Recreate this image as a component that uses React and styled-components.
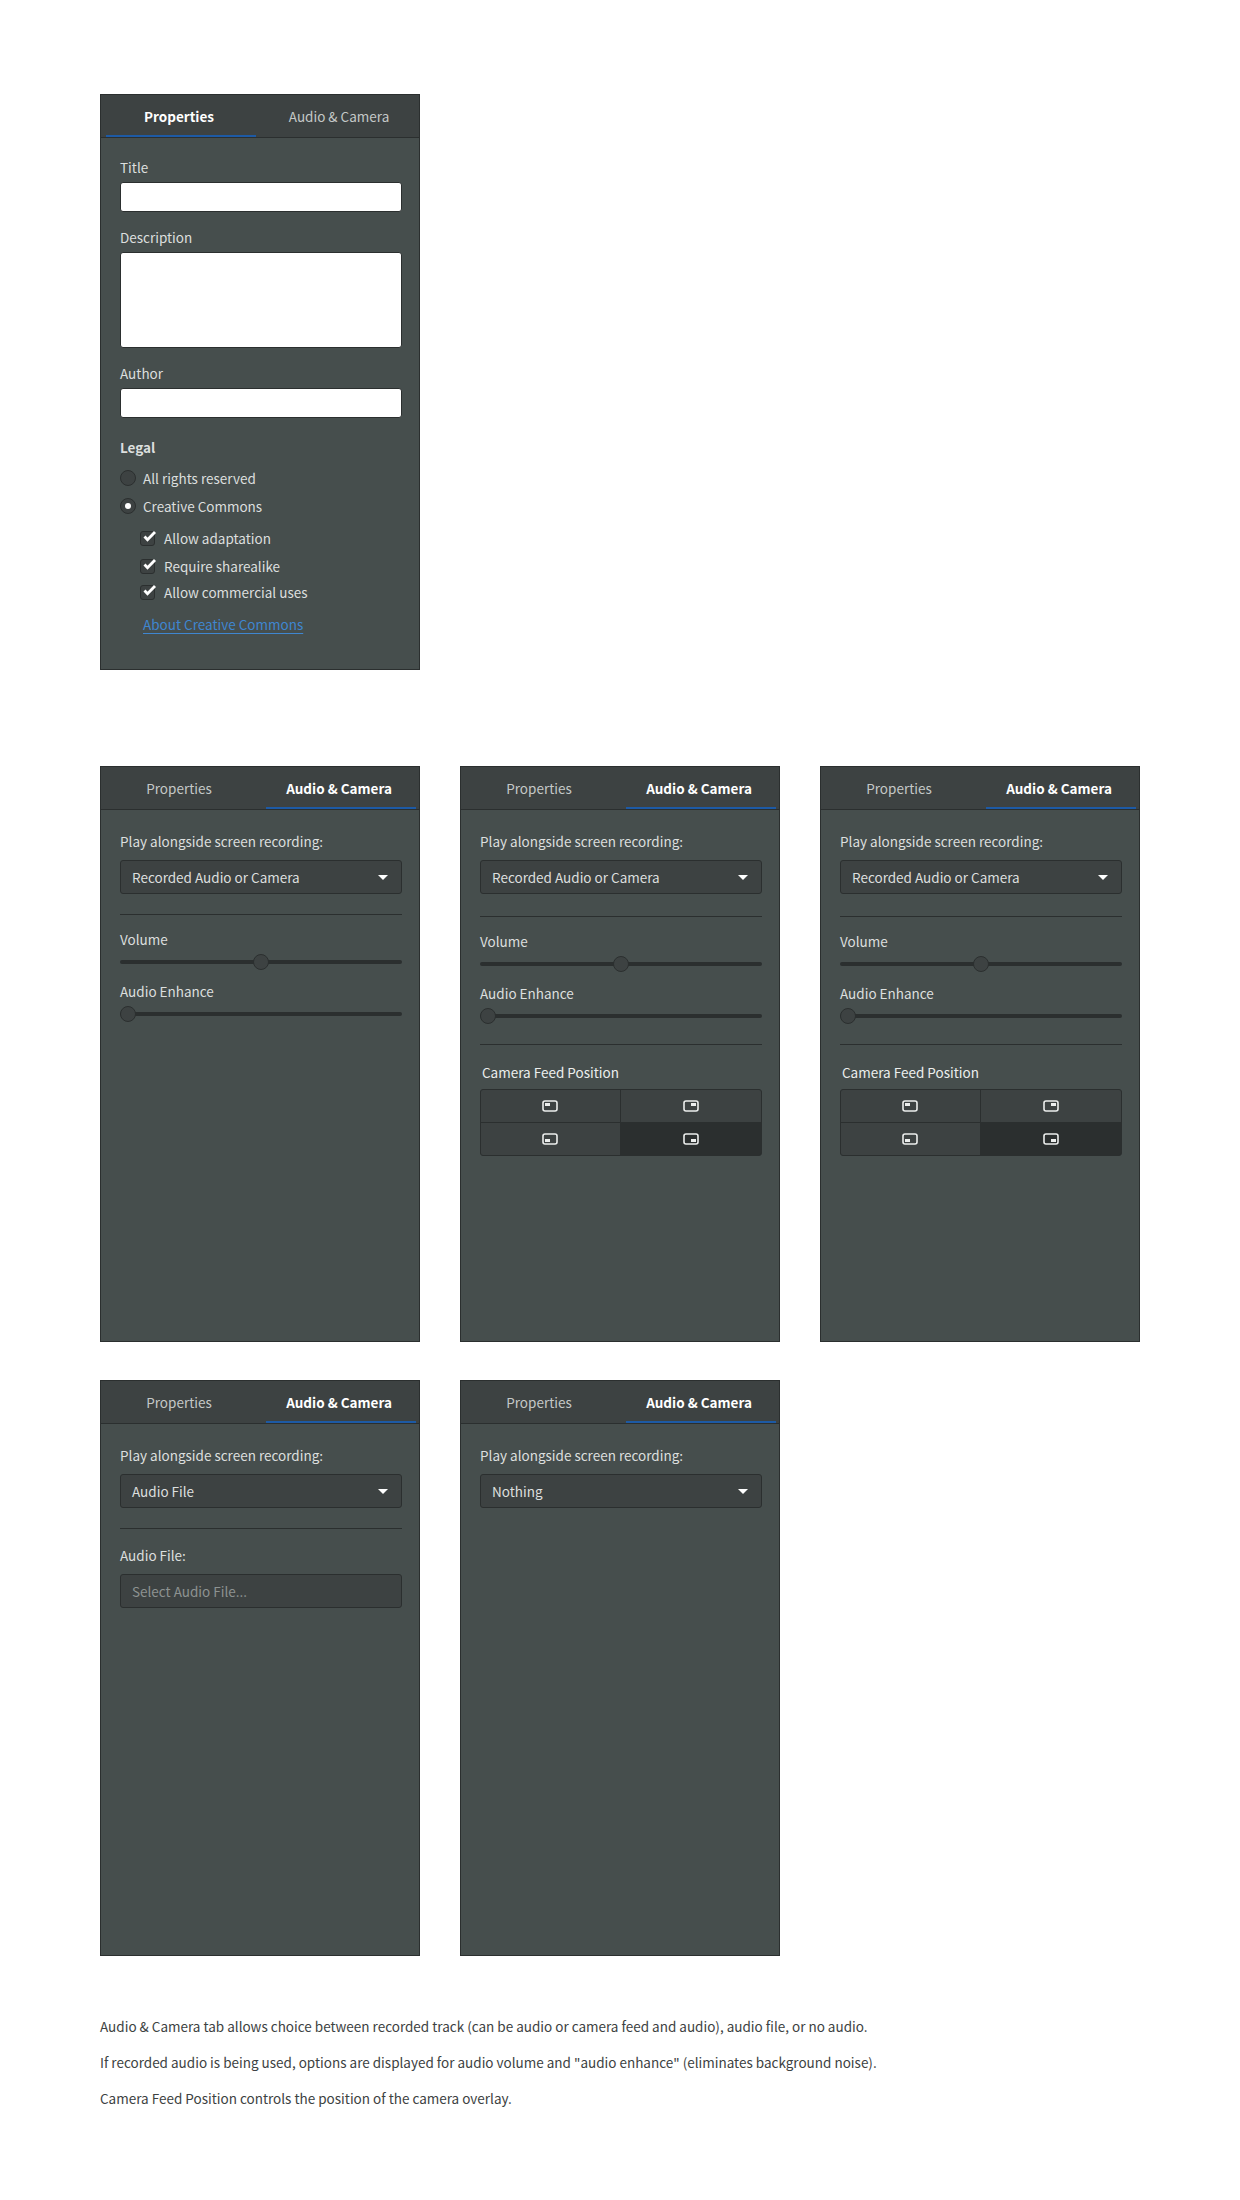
import React from "react";
import styled, { createGlobalStyle } from "styled-components";

const Global = createGlobalStyle`
  html, body { margin: 0; padding: 0; background: #fff; }
  body { font-family: "Noto Sans CJK SC", "Noto Sans", sans-serif; font-size: 13.5px; line-height: 20px; }
`;

const Page = styled.div`
  width: 1240px;
  height: 2200px;
  box-sizing: border-box;
  padding: 94px 0 0 100px;
`;
const Row = styled.div`
  display: flex;
  gap: 40px;
  margin-bottom: ${(p) => p.$mb || 0}px;
`;
const Panel = styled.div`
  width: 320px;
  height: 576px;
  box-sizing: border-box;
  background: #464e4d;
  border: 1px solid #2b2f2f;
  color: #dcdfde;
`;
const Tabs = styled.div`
  display: flex;
  gap: 10px;
  height: 43px;
  box-sizing: border-box;
  padding: 0 3px 0 5px;
  background: #3d4242;
  border-bottom: 1px solid #2b2f2f;
`;
const Tab = styled.div`
  width: 150px;
  height: 42px;
  box-sizing: border-box;
  display: flex;
  align-items: center;
  justify-content: center;
  padding: 2px 4px 0 0;
  color: ${(p) => (p.$active ? "#fff" : "#c4c8c7")};
  font-weight: ${(p) => (p.$active ? 700 : 400)};
  border-bottom: 2px solid ${(p) => (p.$active ? "#1d5aa5" : "transparent")};
`;
const Body = styled.div`
  padding: ${(p) => p.$top || 21}px 17px 0 19px;
`;
const Label = styled.div`
  height: 20px;
  margin: ${(p) => p.$mt || 0}px 0 ${(p) => p.$mb ?? 5}px ${(p) => p.$ml || 0}px;
  color: ${(p) => p.$color || "#dcdfde"};
  font-weight: ${(p) => p.$weight || 400};
`;
const TextBox = styled.div`
  height: ${(p) => p.$h || 30}px;
  box-sizing: border-box;
  background: #fff;
  border: 1px solid #2b2f2f;
  border-radius: 3px;
`;
const Select = styled.div`
  height: 34px;
  box-sizing: border-box;
  display: flex;
  align-items: center;
  justify-content: space-between;
  padding: 0 13px 0 11px;
  background: #3d4242;
  border: 1px solid #2b2f2f;
  border-radius: 3px;
  color: ${(p) => p.$color || "#dcdfde"};
`;
const Caret = styled.span`
  width: 0;
  height: 0;
  border-left: 5px solid transparent;
  border-right: 5px solid transparent;
  border-top: 5px solid #fff;
`;
const Divider = styled.div`
  height: 1px;
  background: #2b2f2f;
  margin: ${(p) => p.$mt || 20}px 0 ${(p) => p.$mb || 14}px;
`;
const SliderWrap = styled.div`
  position: relative;
  height: 16px;
  display: flex;
  align-items: center;
  margin-bottom: ${(p) => p.$mb || 0}px;
`;
const Track = styled.div`
  width: 100%;
  height: 4px;
  border-radius: 2px;
  background: #2b2f2f;
`;
const Thumb = styled.div`
  position: absolute;
  top: 0;
  width: 16px;
  height: 16px;
  box-sizing: border-box;
  border-radius: 50%;
  background: #3d4242;
  border: 1px solid #2b2f2f;
`;
const RadioRow = styled.div`
  display: flex;
  align-items: center;
  gap: 7px;
  height: 20px;
  margin-bottom: ${(p) => p.$mb || 8}px;
`;
const Radio = styled.span`
  width: 16px;
  height: 16px;
  box-sizing: border-box;
  border-radius: 50%;
  background: #3d4242;
  border: 1px solid #2b2f2f;
  display: flex;
  align-items: center;
  justify-content: center;
  &::after {
    content: "";
    display: ${(p) => (p.$on ? "block" : "none")};
    width: 6px;
    height: 6px;
    border-radius: 50%;
    background: #fff;
  }
`;
const CheckRow = styled.div`
  display: flex;
  align-items: center;
  gap: 9px;
  height: 20px;
  margin: 0 0 ${(p) => p.$mb || 0}px 20px;
`;
const Check = styled.span`
  position: relative;
  width: 15px;
  height: 15px;
  box-sizing: border-box;
  border-radius: 3px;
  background: #3d4242;
  border: 1px solid #2b2f2f;
  flex: none;
  svg {
    position: absolute;
    left: 0;
    top: -3px;
  }
`;
const Link = styled.a`
  display: inline-block;
  height: 20px;
  margin: 12px 0 0 23px;
  color: #3f86d0;
  text-decoration: underline;
  text-underline-offset: 3px;
`;
const PosGrid = styled.div`
  display: grid;
  grid-template-columns: 139px 140px;
  grid-template-rows: 32px 32px;
  box-sizing: border-box;
  height: 67px;
  gap: 1px;
  background: #2b2f2f;
  border: 1px solid #2b2f2f;
  border-radius: 3px;
  overflow: hidden;
`;
const PosCell = styled.div`
  display: flex;
  align-items: center;
  justify-content: center;
  padding-right: 1px;
  background: ${(p) => (p.$active ? "#2b2f2f" : "#3d4242")};
`;
const Notes = styled.div`
  margin-top: 60px;
  color: #3d4242;
`;
const Note = styled.p`
  margin: 0 0 16px;
  height: 20px;
`;

const PosIcon = ({ x, y }) => (
  <svg width="16" height="12" viewBox="0 0 16 12">
    <rect x="1" y="1" width="14" height="10" rx="2" fill="none" stroke="#eceeed" strokeWidth="1.6" />
    <rect x={x} y={y} width="5" height="3" fill="#eceeed" />
  </svg>
);

const CheckMark = () => (
  <svg width="16" height="14" viewBox="0 0 16 14">
    <path d="M3.5 7.5 L6.5 10.8 L14 3" fill="none" stroke="#fff" strokeWidth="2.8" />
  </svg>
);

const TabBar = ({ props }) => (
  <Tabs>
    <Tab $active={props}>Properties</Tab>
    <Tab $active={!props}>Audio &amp; Camera</Tab>
  </Tabs>
);

const Properties = () => (
  <Panel>
    <TabBar props />
    <Body $top={19}>
      <Label>Title</Label>
      <TextBox />
      <Label $mt={15}>Description</Label>
      <TextBox $h={96} />
      <Label $mt={15}>Author</Label>
      <TextBox />
      <Label $mt={19} $mb={11} $weight={700}>Legal</Label>
      <RadioRow><Radio />All rights reserved</RadioRow>
      <RadioRow $mb={12}><Radio $on />Creative Commons</RadioRow>
      <CheckRow $mb={8}><Check><CheckMark /></Check>Allow adaptation</CheckRow>
      <CheckRow $mb={6}><Check><CheckMark /></Check>Require sharealike</CheckRow>
      <CheckRow><Check><CheckMark /></Check>Allow commercial uses</CheckRow>
      <Link>About Creative Commons</Link>
    </Body>
  </Panel>
);

const Audio = ({ camera }) => (
  <Panel>
    <TabBar />
    <Body>
      <Label $mb={9}>Play alongside screen recording:</Label>
      <Select>Recorded Audio or Camera<Caret /></Select>
      <Divider $mt={camera ? 22 : 20} />
      <Label $mb={5}>Volume</Label>
      <SliderWrap $mb={11}><Track /><Thumb style={{ left: "133px" }} /></SliderWrap>
      <Label $mb={5}>Audio Enhance</Label>
      <SliderWrap><Track /><Thumb style={{ left: "0px" }} /></SliderWrap>
      {camera && (
        <>
          <Divider $mt={20} $mb={17} />
          <Label $ml={2} $mb={7} $color="#eceeed">Camera Feed Position</Label>
          <PosGrid>
            <PosCell><PosIcon x={3} y={3} /></PosCell>
            <PosCell><PosIcon x={8} y={3} /></PosCell>
            <PosCell><PosIcon x={3} y={6} /></PosCell>
            <PosCell $active><PosIcon x={8} y={6} /></PosCell>
          </PosGrid>
        </>
      )}
    </Body>
  </Panel>
);

const AudioFile = () => (
  <Panel>
    <TabBar />
    <Body>
      <Label $mb={9}>Play alongside screen recording:</Label>
      <Select>Audio File<Caret /></Select>
      <Divider $mb={16} />
      <Label $mb={9}>Audio File:</Label>
      <Select $color="#8d9291">Select Audio File...</Select>
    </Body>
  </Panel>
);

const NothingPanel = () => (
  <Panel>
    <TabBar />
    <Body>
      <Label $mb={9}>Play alongside screen recording:</Label>
      <Select>Nothing<Caret /></Select>
    </Body>
  </Panel>
);

export default function App() {
  return (
    <Page>
      <Global />
      <Row $mb={96}><Properties /></Row>
      <Row $mb={38}><Audio /><Audio camera /><Audio camera /></Row>
      <Row><AudioFile /><NothingPanel /></Row>
      <Notes>
        <Note>Audio &amp; Camera tab allows choice between recorded track (can be audio or camera feed and audio), audio file, or no audio.</Note>
        <Note>If recorded audio is being used, options are displayed for audio volume and "audio enhance" (eliminates background noise).</Note>
        <Note>Camera Feed Position controls the position of the camera overlay.</Note>
      </Notes>
    </Page>
  );
}
